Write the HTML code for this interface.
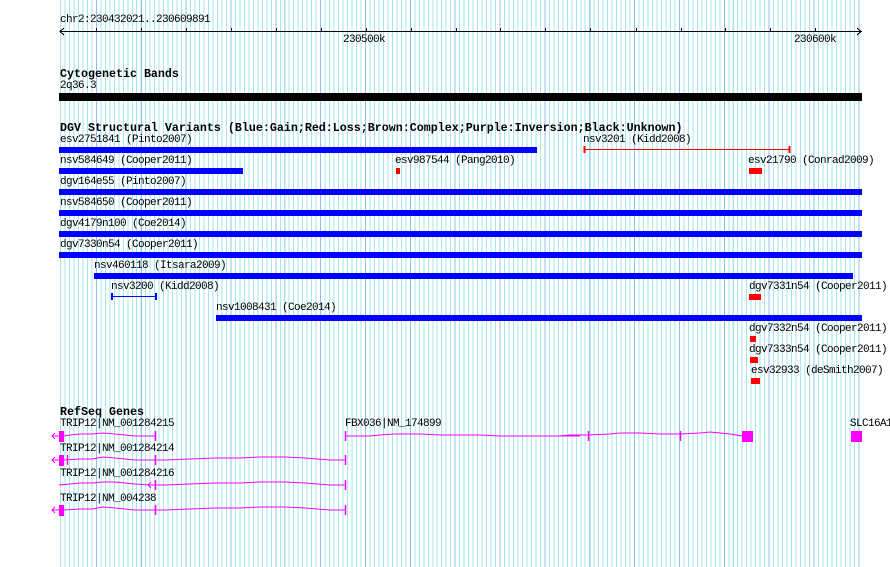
<!DOCTYPE html>
<html><head><meta charset="utf-8"><style>
html,body{margin:0;padding:0;background:#fff;}
#c{position:relative;width:890px;height:567px;overflow:hidden;background:#fff;}
#grid{position:absolute;left:60px;top:0;width:801px;height:567px;
background:
repeating-linear-gradient(90deg,transparent 0 35.9px,#8cc0ea 35.9px 36.9px,transparent 36.9px 44.85px),
repeating-linear-gradient(90deg,#a6e6ec 0 1px,transparent 1px 4.485px);}
.t{position:absolute;font-family:"Liberation Mono",monospace;font-size:11px;letter-spacing:-0.6px;line-height:11px;color:#000;white-space:pre;}
.b{position:absolute;font-family:"Liberation Mono",monospace;font-size:11.67px;font-weight:bold;line-height:12px;color:#000;white-space:pre;}
.r{position:absolute;}
.bl{background:#0000ff;height:6px;}
.rd{background:#ff0000;height:6px;}
</style></head><body><div id="c">
<div id="grid"></div>
<svg class="r" style="left:0;top:0" width="890" height="567">
 <g stroke="#000" stroke-width="1" shape-rendering="crispEdges">
  <line x1="60" y1="31.5" x2="862" y2="31.5"/>
  <polyline points="64,28 60,31.5 64,35" fill="none"/>
  <polyline points="857,28 861,31.5 857,35" fill="none"/>
 </g>
 <g stroke="#000">
  <path d="M96.5 28v4M141.5 28v4M186.5 28v4M231.5 28v4M276.5 28v4M321.5 28v4M366.5 28v4M411.5 28v4M456.5 28v4M500.5 28v4M545.5 28v4M590.5 28v4M636.5 28v4M681.5 28v4M725.5 28v4M770.5 28v4M815.5 28v4"/>
 </g>
 <g stroke="#ff0000">
  <line x1="584" y1="149.5" x2="789" y2="149.5"/>
  <line x1="584.5" y1="146" x2="584.5" y2="153" stroke-width="2"/>
  <line x1="789.5" y1="146" x2="789.5" y2="153" stroke-width="2"/>
 </g>
 <g stroke="#0000ff">
  <line x1="112" y1="296.5" x2="156" y2="296.5"/>
  <line x1="112" y1="293" x2="112" y2="300" stroke-width="2"/>
  <line x1="156" y1="293" x2="156" y2="300" stroke-width="2"/>
 </g>
 <g stroke="#ff00ff" fill="none">
  <polyline points="55,433 52,436 55,439"/>
  <line x1="52" y1="436" x2="60" y2="436"/>
  <polyline points="64,436 70,435 80,434 92,434 103,433 115,434 125,435 135,436 155,436"/>
  <line x1="155.5" y1="431" x2="155.5" y2="441" stroke-width="1.5"/>
  <line x1="345.5" y1="431" x2="345.5" y2="441" stroke-width="1.5"/>
  <polyline points="345,436 370,436 380,435 395,434 420,434 440,435 460,435 480,435 500,436 580,436"/>
  <polyline points="560,436 570,435 588,435 610,434 620,433 640,433 660,434 680,434 700,433 710,432 720,433 730,434 742,436"/>
  <line x1="588.5" y1="431" x2="588.5" y2="441" stroke-width="1.5"/>
  <line x1="680.5" y1="431" x2="680.5" y2="441" stroke-width="1.5"/>

  <polyline points="55,457 52,460 55,463"/>
  <line x1="52" y1="460" x2="60" y2="460"/>
  <line x1="67.5" y1="455" x2="67.5" y2="465" stroke-width="1.5"/>
  <polyline points="64,460 80,459 92,459 103,457 115,458 125,459 135,460 155,460 165,460 190,459 215,458 240,458 260,457 285,457 305,458 330,460 345,460"/>
  <line x1="155.5" y1="455" x2="155.5" y2="465" stroke-width="1.5"/>
  <line x1="345.5" y1="455" x2="345.5" y2="465" stroke-width="1.5"/>

  <polyline points="59,485 70,484 80,483 92,483 103,482 115,482 125,483 135,484 150,485 155,485 165,485 190,484 215,483 240,483 260,482 285,482 305,483 330,485 345,485"/>
  <polyline points="151,482 148,485 151,488"/>
  <line x1="155.5" y1="480" x2="155.5" y2="490" stroke-width="1.5"/>
  <line x1="345.5" y1="480" x2="345.5" y2="490" stroke-width="1.5"/>

  <polyline points="55,507 52,510 55,513"/>
  <line x1="52" y1="510" x2="60" y2="510"/>
  <polyline points="64,510 80,509 92,509 103,507 115,508 125,509 135,510 155,510 165,510 190,509 215,508 240,508 260,507 285,507 305,508 330,510 345,510"/>
  <line x1="155.5" y1="505" x2="155.5" y2="515" stroke-width="1.5"/>
  <line x1="345.5" y1="505" x2="345.5" y2="515" stroke-width="1.5"/>
 </g>
 <g fill="#ff00ff">
  <rect x="59" y="431" width="5" height="11"/>
  <rect x="742" y="431" width="11" height="11"/>
  <rect x="851" y="431" width="11" height="11"/>
  <rect x="59" y="455" width="5" height="11"/>
  <rect x="59" y="505" width="5" height="11"/>
 </g>
</svg>

<div class="t" style="left:60px;top:15px">chr2:230432021..230609891</div>
<div class="t" style="left:343px;top:35px">230500k</div>
<div class="t" style="left:794px;top:35px">230600k</div>

<div class="b" style="left:60px;top:68px">Cytogenetic Bands</div>
<div class="t" style="left:60px;top:81px">2q36.3</div>
<div class="r" style="left:59px;top:93px;width:803px;height:8px;background:#000"></div>

<div class="b" style="left:60px;top:122px">DGV Structural Variants (Blue:Gain;Red:Loss;Brown:Complex;Purple:Inversion;Black:Unknown)</div>

<div class="t" style="left:60px;top:135px">esv2751841 (Pinto2007)</div>
<div class="r bl" style="left:59px;top:147px;width:478px"></div>
<div class="t" style="left:583px;top:135px">nsv3201 (Kidd2008)</div>

<div class="t" style="left:60px;top:156px">nsv584649 (Cooper2011)</div>
<div class="r bl" style="left:59px;top:168px;width:184px"></div>
<div class="t" style="left:395px;top:156px">esv987544 (Pang2010)</div>
<div class="r rd" style="left:396px;top:168px;width:4px"></div>
<div class="t" style="left:748px;top:156px">esv21790 (Conrad2009)</div>
<div class="r rd" style="left:749px;top:168px;width:13px"></div>

<div class="t" style="left:60px;top:177px">dgv164e55 (Pinto2007)</div>
<div class="r bl" style="left:59px;top:189px;width:803px"></div>
<div class="t" style="left:60px;top:198px">nsv584650 (Cooper2011)</div>
<div class="r bl" style="left:59px;top:210px;width:803px"></div>
<div class="t" style="left:60px;top:219px">dgv4179n100 (Coe2014)</div>
<div class="r bl" style="left:59px;top:231px;width:803px"></div>
<div class="t" style="left:60px;top:240px">dgv7330n54 (Cooper2011)</div>
<div class="r bl" style="left:59px;top:252px;width:803px"></div>

<div class="t" style="left:94px;top:261px">nsv460118 (Itsara2009)</div>
<div class="r bl" style="left:94px;top:273px;width:759px"></div>

<div class="t" style="left:111px;top:282px">nsv3200 (Kidd2008)</div>
<div class="t" style="left:749px;top:282px">dgv7331n54 (Cooper2011)</div>
<div class="r rd" style="left:749px;top:294px;width:12px"></div>

<div class="t" style="left:216px;top:303px">nsv1008431 (Coe2014)</div>
<div class="r bl" style="left:216px;top:315px;width:646px"></div>

<div class="t" style="left:749px;top:324px">dgv7332n54 (Cooper2011)</div>
<div class="r rd" style="left:750px;top:336px;width:6px"></div>
<div class="t" style="left:749px;top:345px">dgv7333n54 (Cooper2011)</div>
<div class="r rd" style="left:750px;top:357px;width:8px"></div>
<div class="t" style="left:751px;top:366px">esv32933 (deSmith2007)</div>
<div class="r rd" style="left:751px;top:378px;width:9px"></div>

<div class="b" style="left:60px;top:406px">RefSeq Genes</div>
<div class="t" style="left:60px;top:419px">TRIP12|NM_001284215</div>
<div class="t" style="left:345px;top:419px">FBX036|NM_174899</div>
<div class="t" style="left:850px;top:419px">SLC16A1</div>
<div class="t" style="left:60px;top:444px">TRIP12|NM_001284214</div>
<div class="t" style="left:60px;top:469px">TRIP12|NM_001284216</div>
<div class="t" style="left:60px;top:494px">TRIP12|NM_004238</div>
</div></body></html>
